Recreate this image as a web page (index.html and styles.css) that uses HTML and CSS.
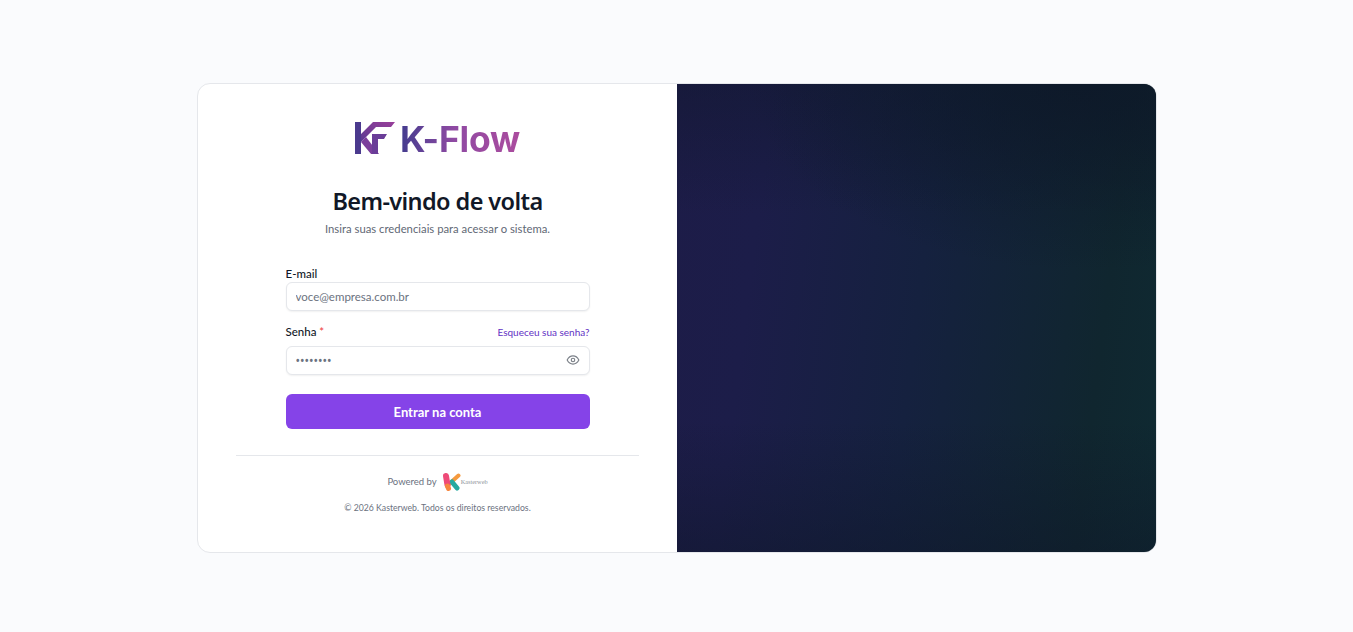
FILE: index.html
```html
<!DOCTYPE html>
<html lang="pt-BR">
<head>
<meta charset="utf-8">
<title>K-Flow</title>
<link rel="stylesheet" href="styles.css">
</head>
<body>
<main class="card">
  <section class="left">
    <div class="logo">
      <svg class="logo-mark" width="40" height="32" viewBox="0 0 40 32" aria-hidden="true">
        <defs>
          <linearGradient id="kf" x1="0" y1="1" x2="1" y2="0">
            <stop offset="0" stop-color="#5a3a92"/>
            <stop offset="1" stop-color="#9a3f9a"/>
          </linearGradient>
        </defs>
        <path d="M0 0h6v32H0z" fill="#4b3a8e"/>
        <path d="M6 12 18 0h22l-4 5H21L6 20z" fill="url(#kf)"/>
        <path d="M6 20l5-5 13 17h-8z" fill="#7b3f9c"/>
        <path d="M17 12h15l-3 5h-6v15h-6z" fill="#6a3d98"/>
      </svg>
      <span class="logo-text">K-Flow</span>
    </div>
    <h1 class="title">Bem-vindo de volta</h1>
    <p class="subtitle">Insira suas credenciais para acessar o sistema.</p>
    <form class="form">
      <label class="label" for="email">E-mail</label>
      <input class="input" id="email" type="text" placeholder="voce@empresa.com.br">
      <div class="label-row">
        <label class="label" for="senha">Senha <span class="req">*</span></label>
        <a class="forgot" href="#">Esqueceu sua senha?</a>
      </div>
      <div class="pass-wrap">
        <input class="input input-pass" id="senha" type="password" value="12345678">
        <svg class="eye" width="14" height="14" viewBox="0 0 24 24" fill="none" stroke="currentColor" stroke-width="2" stroke-linecap="round" stroke-linejoin="round" aria-hidden="true">
          <path d="M2 12s3.600-7 10-7 10 7 10 7-3.600 7-10 7-10-7-10-7z"/>
          <circle cx="12" cy="12" r="3"/>
        </svg>
      </div>
      <button class="submit" type="button">Entrar na conta</button>
    </form>
    <hr class="divider">
    <div class="powered">
      <span>Powered by</span>
      <span class="kw">
        <svg width="19" height="19" viewBox="0 0 19 19" fill="none" stroke-linecap="round" aria-hidden="true">
          <path d="M6 13 16.500 3.500" stroke="#f59a3e" stroke-width="4"/>
          <path d="M10 10l5 6" stroke="#25a9a0" stroke-width="5"/>
          <path d="M4 4l1.500 9" stroke="#ee4a78" stroke-width="6"/>
          <path d="M5.500 14l1 2.500" stroke="#f7863f" stroke-width="5"/>
        </svg>
        <span class="kw-name">Kasterweb</span>
      </span>
    </div>
    <p class="copy">© 2026 Kasterweb. Todos os direitos reservados.</p>
  </section>
  <section class="right"></section>
</main>
</body>
</html>
```
FILE: styles.css
```css
* { box-sizing: border-box; }
html, body { margin: 0; height: 100%; }
body {
  background: #fafbfd;
  font-family: "Lato", "Noto Sans", "Liberation Sans", sans-serif;
  color: #111827;
  display: flex;
  justify-content: center;
  padding: 83px 0 0 1px;
  overflow: hidden;
}
.card {
  width: 960px;
  height: 470px;
  display: flex;
  background: #fff;
  border: 1px solid #e5e7eb;
  border-radius: 13px;
  overflow: hidden;
}
.left {
  width: 479px;
  padding: 0 38px;
  display: flex;
  flex-direction: column;
  align-items: stretch;
}
.right {
  flex: 1;
  background:
    radial-gradient(ellipse 70% 40% at 85% 0%, rgba(13,24,40,.8) 0%, rgba(13,24,40,0) 100%),
    linear-gradient(180deg, rgba(14,22,40,.4) 0%, rgba(14,22,40,0) 28%, rgba(14,22,40,0) 72%, rgba(14,22,40,.45) 100%),
    linear-gradient(97deg, #1d1c48 0%, #1c1d49 18%, #15213f 50%, #10262f 85%, #0f2a32 100%);
}
.logo {
  display: flex;
  justify-content: center;
  align-items: center;
  gap: 5px;
  margin-top: 38px;
  height: 32px;
}
.logo-text {
  font-family: "Inter", sans-serif;
  font-weight: 700;
  font-size: 35.500px;
  line-height: 32px;
  letter-spacing: -0.2px;
  margin-top: 4px;
  background: linear-gradient(90deg, #433c8e 0%, #8f4aa3 45%, #ab4c9e 100%);
  -webkit-background-clip: text;
  background-clip: text;
  color: transparent;
}
.title {
  margin: 31px 0 0;
  font-family: "Noto Sans", sans-serif;
  font-size: 23.500px;
  line-height: 32px;
  font-weight: 600;
  text-align: center;
  color: #111827;
  letter-spacing: -0.6px;
}
.subtitle {
  margin: 4px 0 0;
  font-size: 11.300px;
  line-height: 16px;
  text-align: center;
  color: #5f6875;
}
.form {
  width: 304px;
  margin: 29px auto 0;
  display: flex;
  flex-direction: column;
}
.label {
  font-size: 11.500px;
  line-height: 16px;
  font-weight: 500;
  color: #111827;
}
.req { color: #ef4444; }
.input {
  display: block;
  width: 100%;
  height: 29px;
  padding: 0 9px;
  font: inherit;
  font-size: 11.500px;
  color: #6b7280;
  background: #fff;
  border: 1px solid #e5e7eb;
  border-radius: 6px;
  box-shadow: 0 1px 2px rgba(0,0,0,.06);
  outline: none;
}
.input::placeholder { color: #6b7280; opacity: 1; }
.label-row {
  display: flex;
  justify-content: space-between;
  align-items: center;
  margin: 13px 0 6px;
}
.forgot {
  font-size: 10px;
  line-height: 16px;
  color: #6231c4;
  text-decoration: none;
}
.pass-wrap { position: relative; }
.input-pass {
  padding-right: 34px;
  font-family: "Noto Sans", sans-serif;
  font-size: 12px;
}
.eye {
  position: absolute;
  right: 10px;
  top: 7px;
  color: #7b8088;
}
.submit {
  margin-top: 19px;
  height: 35px;
  border: 0;
  border-radius: 6px;
  background: #8543e8;
  color: #fff;
  font: inherit;
  font-size: 13px;
  font-weight: 700;
}
.divider {
  width: 100%;
  margin: 26px 0 0;
  border: 0;
  border-top: 1px solid #e5e7eb;
}
.powered {
  display: flex;
  justify-content: center;
  align-items: center;
  gap: 5px;
  margin-top: 15px;
  height: 20px;
  font-size: 9.500px;
  color: #6b7280;
}
.kw { display: flex; align-items: center; gap: 0; }
.kw-name {
  font-size: 6.300px;
  color: #8f949c;
  font-family: "Liberation Serif", serif;
}
.copy {
  margin: 10px 0 0;
  font-size: 8.700px;
  line-height: 14px;
  text-align: center;
  color: #6b7280;
}
```
